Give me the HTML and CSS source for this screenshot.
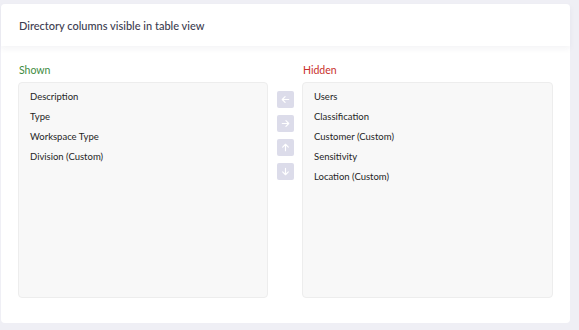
FILE: index.html
```html
<!DOCTYPE html>
<html lang="en">
<head>
  <meta charset="UTF-8">
  <title>Directory columns</title>
  <link rel="stylesheet" href="styles.css">
</head>
<body>
  <div class="card">
    <div class="card-header">
      <h3>Directory columns visible in table view</h3>
    </div>

    <div class="card-body">
      <div class="column">
        <div class="label shown">Shown</div>
        <ul class="list">
          <li>Description</li>
          <li>Type</li>
          <li>Workspace Type</li>
          <li>Division (Custom)</li>
        </ul>
      </div>

      <div class="controls">
        <button title="Move left">
          <svg viewBox="0 0 16 16"><path d="M12 8H4M7.5 4.5L4 8l3.5 3.5" /></svg>
        </button>
        <button title="Move right">
          <svg viewBox="0 0 16 16"><path d="M4 8h8M8.5 4.5L12 8l-3.5 3.5" /></svg>
        </button>
        <button title="Move up">
          <svg viewBox="0 0 16 16"><path d="M8 12V4M4.5 7.5L8 4l3.5 3.5" /></svg>
        </button>
        <button title="Move down">
          <svg viewBox="0 0 16 16"><path d="M8 4v8M4.5 8.5L8 12l3.5-3.5" /></svg>
        </button>
      </div>

      <div class="column">
        <div class="label hidden">Hidden</div>
        <ul class="list">
          <li>Users</li>
          <li>Classification</li>
          <li>Customer (Custom)</li>
          <li>Sensitivity</li>
          <li>Location (Custom)</li>
        </ul>
      </div>
    </div>
  </div>
</body>
</html>
```

FILE: styles.css
```css
body {
  margin: 0;
  background: #efeff5;
  font-family: Lato, "Noto Sans", sans-serif;
  color: #25252f;
}
.card {
  margin: 4px 9px 0 1px;
  background: #fff;
  border-radius: 4px;
  height: 319px;
  display: flex;
  flex-direction: column;
}
.card-header {
  height: 42px;
  display: flex;
  align-items: center;
  padding: 0 18px;
  box-shadow: 0 3px 6px rgba(40, 40, 80, 0.05);
}
.card-header h3 {
  margin: 0;
  font-size: 11px;
  font-weight: 500;
  color: #3c3c50;
}
.card-body {
  display: grid;
  grid-template-columns: 250px 34px 251px;
  padding: 16px 17px 0 17px;
}
.label {
  font-size: 10.5px;
  height: 17px;
  line-height: 17px;
  margin-bottom: 3px;
  padding-left: 1px;
}
.label.shown {
  color: #3e8a3e;
}
.label.hidden {
  color: #c9302c;
}
.list {
  list-style: none;
  margin: 0;
  padding: 4px 11px 3px;
  height: 207px;
  background: #f8f8f8;
  border: 1px solid #ededed;
  border-radius: 4px;
}
.list li {
  font-size: 9.5px;
  line-height: 20px;
  color: #1f1f1f;
}
.controls {
  display: flex;
  flex-direction: column;
  align-items: center;
  gap: 7px;
  padding-top: 29px;
}
.controls button {
  width: 17px;
  height: 17px;
  padding: 0;
  border: none;
  border-radius: 2px;
  background: #dcdcea;
  display: flex;
  align-items: center;
  justify-content: center;
}
.controls svg {
  width: 13px;
  height: 13px;
  fill: none;
  stroke: #fff;
  stroke-width: 1.4;
  stroke-linecap: round;
  stroke-linejoin: round;
}
```
